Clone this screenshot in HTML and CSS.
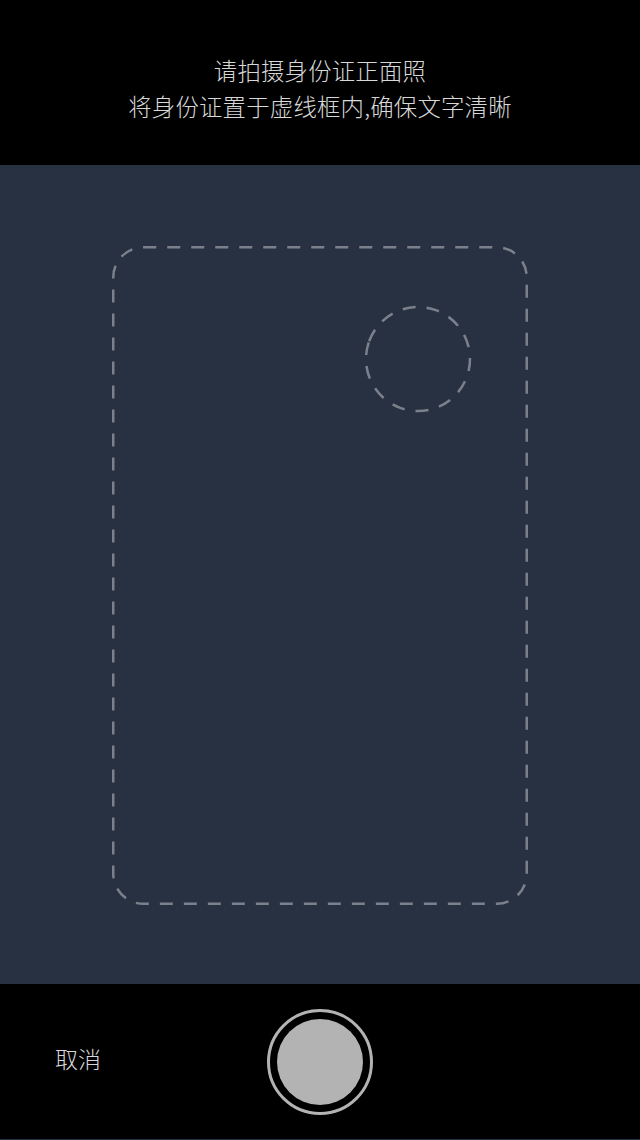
FILE: index.html
```html
<!DOCTYPE html>
<html lang="zh-CN">
<head>
<meta charset="utf-8">
<title>拍摄身份证</title>
<link rel="stylesheet" href="styles.css">
</head>
<body>
<div class="page">
  <header class="top">
    <p class="line">请拍摄身份证正面照</p>
    <p class="line">将身份证置于虚线框内,确保文字清晰</p>
  </header>
  <main class="view">
    <svg class="frame" width="416" height="659" viewBox="0 0 416 659">
      <rect x="1.25" y="1.25" width="413.5" height="656.5" rx="30" ry="30" fill="none" stroke="#7b808b" stroke-width="2.5" stroke-dasharray="13 11"/>
      <circle cx="306" cy="113" r="52" fill="none" stroke="#7b808b" stroke-width="2.5" stroke-dasharray="13 11" transform="rotate(200 306 113)"/>
    </svg>
  </main>
  <footer class="bottom">
    <span class="cancel">取消</span>
    <span class="shutter"><span class="shutter-inner"></span></span>
  </footer>
</div>
</body>
</html>
```
FILE: styles.css
```css
* { box-sizing: border-box; }
html, body { margin: 0; padding: 0; }
body {
  background: #283142;
  font-family: "Noto Sans CJK SC", "Noto Sans", sans-serif;
}
.page {
  width: 640px;
  height: 1140px;
  display: flex;
  flex-direction: column;
}
.top {
  height: 165px;
  background: #000;
  display: flex;
  flex-direction: column;
  align-items: center;
  padding-top: 52px;
}
.line {
  margin: 0;
  color: #d8d8d8;
  font-size: 23.4px;
  font-weight: 300;
  line-height: 36px;
  letter-spacing: 0.2px;
}
.view {
  height: 819px;
  background: #283142;
  display: flex;
  justify-content: center;
  padding-top: 81px;
}
.frame { display: block; }
.bottom {
  height: 155px;
  background: #000;
  position: relative;
  display: flex;
  align-items: center;
  justify-content: center;
}
.cancel {
  position: absolute;
  left: 55px;
  top: 58px;
  color: #d8d8d8;
  font-size: 23px;
  font-weight: 300;
  line-height: 32px;
}
.shutter {
  width: 106px;
  height: 106px;
  border-radius: 50%;
  border: 3px solid #b3b3b3;
  display: flex;
  align-items: center;
  justify-content: center;
  margin-top: 1px;
}
.shutter-inner {
  width: 86px;
  height: 86px;
  border-radius: 50%;
  background: #b3b3b3;
}
```
